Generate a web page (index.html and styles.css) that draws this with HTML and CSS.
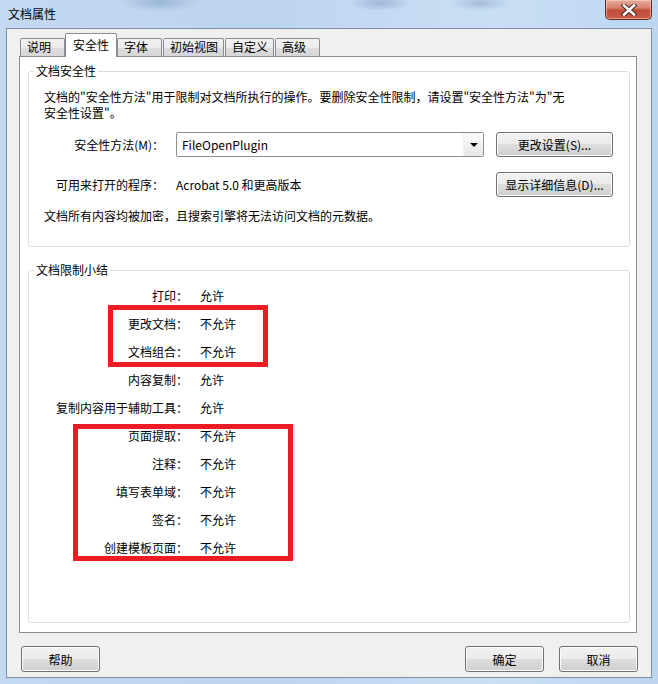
FILE: index.html
```html
<!DOCTYPE html>
<html lang="zh-CN">

<head>
  <meta charset="UTF-8" />
  <title>文档属性</title>
  <link rel="stylesheet" href="styles.css">
</head>

<body>
  <div class="window">
    <div class="titlebar">
      <span class="title">文档属性</span>
      <button class="close" type="button">
        <svg width="20" height="12" viewBox="0 0 20 12">
          <path d="M5 1.5 L15 10.5 M15 1.5 L5 10.5" stroke="#4a2a24" stroke-width="4.6" stroke-linecap="square" />
          <path d="M5 1.5 L15 10.5 M15 1.5 L5 10.5" stroke="#fff" stroke-width="2.6" stroke-linecap="square" />
        </svg>
      </button>
    </div>

    <div class="client">
      <div class="tabs">
        <span class="tab">说明</span>
        <span class="tab active">安全性</span>
        <span class="tab">字体</span>
        <span class="tab">初始视图</span>
        <span class="tab">自定义</span>
        <span class="tab">高级</span>
      </div>

      <div class="panel">
        <fieldset class="group">
          <legend>文档安全性</legend>
          <p class="desc">文档的"安全性方法"用于限制对文档所执行的操作。要删除安全性限制，请设置"安全性方法"为"无<br>安全性设置"。</p>
          <div class="form">
            <span class="label">安全性方法(M)：</span>
            <div class="combo">
              <span class="combo-text">FileOpenPlugin</span>
              <span class="combo-btn"><i class="arrow"></i></span>
            </div>
            <button class="btn" type="button">更改设置(S)...</button>
            <span class="label">可用来打开的程序：</span>
            <span class="value">Acrobat 5.0 和更高版本</span>
            <button class="btn" type="button">显示详细信息(D)...</button>
          </div>
          <p class="note">文档所有内容均被加密，且搜索引擎将无法访问文档的元数据。</p>
        </fieldset>

        <fieldset class="group summary">
          <legend>文档限制小结</legend>
          <div class="rows">
            <span class="label">打印：</span><span>允许</span>
            <span class="label">更改文档：</span><span>不允许</span>
            <span class="label">文档组合：</span><span>不允许</span>
            <span class="label">内容复制：</span><span>允许</span>
            <span class="label">复制内容用于辅助工具：</span><span>允许</span>
            <span class="label">页面提取：</span><span>不允许</span>
            <span class="label">注释：</span><span>不允许</span>
            <span class="label">填写表单域：</span><span>不允许</span>
            <span class="label">签名：</span><span>不允许</span>
            <span class="label">创建模板页面：</span><span>不允许</span>
            <div class="mark mark-edit"></div>
            <div class="mark mark-pages"></div>
          </div>
        </fieldset>
      </div>

      <div class="actions">
        <button class="btn help" type="button">帮助</button>
        <button class="btn" type="button">确定</button>
        <button class="btn" type="button">取消</button>
      </div>
    </div>
  </div>
</body>

</html>
```

FILE: styles.css
```css
* {
  box-sizing: border-box;
}

body {
  margin: 0;
  font: 12px "Noto Sans CJK SC", sans-serif;
  color: #000;
}

.window {
  width: 658px;
  height: 684px;
  padding: 0 6px 6px;
  display: flex;
  flex-direction: column;
  background:
    radial-gradient(ellipse 40px 10px at 160px 2px, rgba(110, 140, 180, 0.45), transparent),
    radial-gradient(ellipse 30px 8px at 380px 3px, rgba(110, 140, 180, 0.45), transparent),
    radial-gradient(ellipse 30px 8px at 480px 3px, rgba(110, 140, 180, 0.4), transparent),
    linear-gradient(to right, #c2d9f1, #bcd5ef 40%, #c9dff5 75%, #bcd6f0);
}

.titlebar {
  height: 28px;
  display: flex;
  justify-content: space-between;
  align-items: flex-start;
  padding-left: 2px;
}

.title {
  line-height: 28px;
}

.close {
  width: 47px;
  height: 20px;
  padding: 0;
  border: 1px solid #5e2b24;
  border-top: 0;
  border-radius: 0 0 5px 5px;
  background: linear-gradient(#e6ab9d, #d8826e 40%, #c24b36 55%, #c9604a);
  box-shadow: inset 0 0 0 1px rgba(255, 220, 210, 0.5);
  display: flex;
  align-items: center;
  justify-content: center;
}

.client {
  flex: 1;
  display: flex;
  flex-direction: column;
  padding: 4px 0 5px;
  background: #f0f0f0;
  border: 1px solid #7d8ea2;
}

.tabs {
  height: 24px;
  display: flex;
  align-items: flex-end;
  padding-left: 13px;
}

.tab {
  height: 18px;
  min-width: 45px;
  margin: 0 1px 1px 0;
  padding: 0 5px 0 6px;
  line-height: 16px;
  border: 1px solid #898c95;
  border-bottom: 0;
  border-radius: 2px 2px 0 0;
  background: linear-gradient(#f3f3f3, #ebebeb 50%, #dedede 51%, #d6d6d6);
}

.tab.active {
  position: relative;
  z-index: 1;
  height: 24px;
  margin: 0 0 0 -1px;
  padding: 0 7px;
  line-height: 21px;
  background: #fff;
}

.panel {
  flex: 1;
  display: flex;
  flex-direction: column;
  margin: -1px 14px 0 12px;
  padding: 6px 6px 9px 8px;
  background: #fff;
  border: 1px solid #898c95;
}

.group {
  margin: 0;
  padding: 0;
  min-width: 0;
  border: 1px solid #d5dfe5;
  border-radius: 3px;
}

.group legend {
  margin-left: 5px;
  padding: 0 2px;
  line-height: 16px;
}

.desc {
  margin: 10px 0 0 15px;
  line-height: 16px;
}

.form {
  display: grid;
  grid-template-columns: 135px 308px 117px;
  grid-auto-rows: 25px;
  column-gap: 12px;
  row-gap: 15px;
  align-items: center;
  margin-top: 11px;
}

.label {
  text-align: right;
  white-space: nowrap;
}

.combo {
  height: 25px;
  display: flex;
  border: 1px solid #8e8f8f;
  border-radius: 2px;
  background: #fff;
}

.combo-text {
  flex: 1;
  padding-left: 5px;
  line-height: 23px;
}

.combo-btn {
  width: 20px;
  display: flex;
  align-items: center;
  justify-content: center;
  border-left: 1px solid #f2f2f2;
  background: linear-gradient(#fbfbfb, #f1f1f1 50%, #e7e7e7);
}

.arrow {
  width: 0;
  height: 0;
  border-left: 4px solid transparent;
  border-right: 4px solid transparent;
  border-top: 4px solid #000;
}

.btn {
  height: 25px;
  padding: 0;
  font: inherit;
  color: #000;
  border: 1px solid #707070;
  border-radius: 3px;
  background: linear-gradient(#f2f2f2, #ebebeb 49%, #dddddd 50%, #cfcfcf);
  box-shadow: inset 0 0 0 1px #fbfbfb;
}

.note {
  margin: 11px 0 23px 15px;
  line-height: 15px;
}

.summary {
  flex: 1;
  margin-top: 15px;
}

.rows {
  position: relative;
  display: grid;
  grid-template-columns: 159px auto;
  grid-auto-rows: 28px;
  column-gap: 12px;
  align-items: center;
  margin-top: 3px;
}

.mark {
  position: absolute;
  border: 5px solid #ed1c24;
}

.mark-edit {
  left: 79px;
  top: 24px;
  width: 160px;
  height: 62px;
}

.mark-pages {
  left: 44px;
  top: 143px;
  width: 220px;
  height: 137px;
}

.actions {
  display: flex;
  gap: 15px;
  margin: 13px 13px 0 14px;
}

.actions .btn {
  width: 79px;
  height: 26px;
}

.actions .help {
  margin-right: auto;
}
```
